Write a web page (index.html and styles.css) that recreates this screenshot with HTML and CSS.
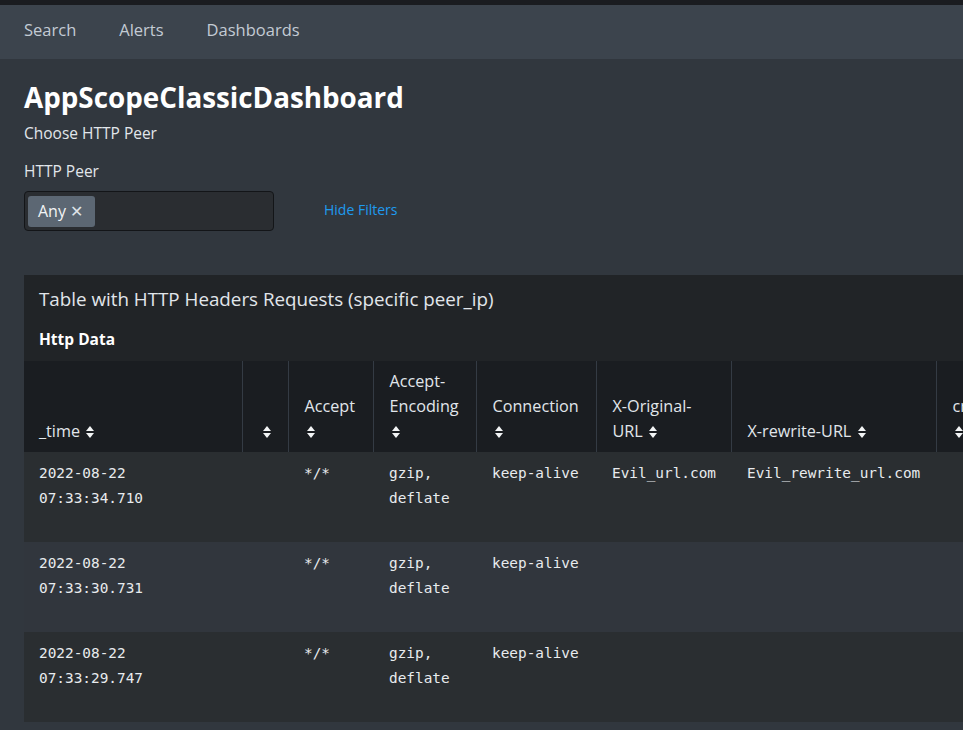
FILE: index.html
```html
<!DOCTYPE html>
<html>
<head>
<meta charset="utf-8">
<link rel="stylesheet" href="styles.css">
</head>
<body>
<nav class="nav">
  <a class="nav-item">Search</a>
  <a class="nav-item">Alerts</a>
  <a class="nav-item">Dashboards</a>
</nav>
<main class="main">
  <h1 class="title">AppScopeClassicDashboard</h1>
  <p class="desc">Choose HTTP Peer</p>
  <div class="filter-label">HTTP Peer</div>
  <div class="filter-row">
    <div class="multiselect">
      <span class="chip">Any <span class="chip-x">✕</span></span>
    </div>
    <a class="hide-filters">Hide Filters</a>
  </div>
  <section class="panel">
    <h2 class="panel-title">Table with HTTP Headers Requests (specific peer_ip)</h2>
    <h3 class="panel-sub">Http Data</h3>
    <table class="tbl">
      <colgroup>
        <col class="c-time"><col class="c-blank"><col class="c-accept"><col class="c-enc"><col class="c-conn"><col class="c-orig"><col class="c-rew"><col class="c-cr">
      </colgroup>
      <thead>
        <tr>
          <th>_time <span class="sort"></span></th>
          <th class="th-blank"><span class="sort"></span></th>
          <th>Accept <span class="sort"></span></th>
          <th>Accept-Encoding <span class="sort"></span></th>
          <th>Connection <span class="sort"></span></th>
          <th>X-Original-URL <span class="sort"></span></th>
          <th>X-rewrite-URL <span class="sort"></span></th>
          <th>credentials <span class="sort"></span></th>
        </tr>
      </thead>
      <tbody>
        <tr>
          <td>2022-08-22 07:33:34.710</td><td></td><td>*/*</td><td>gzip, deflate</td><td>keep-alive</td><td>Evil_url.com</td><td>Evil_rewrite_url.com</td><td></td>
        </tr>
        <tr class="alt">
          <td>2022-08-22 07:33:30.731</td><td></td><td>*/*</td><td>gzip, deflate</td><td>keep-alive</td><td></td><td></td><td></td>
        </tr>
        <tr>
          <td>2022-08-22 07:33:29.747</td><td></td><td>*/*</td><td>gzip, deflate</td><td>keep-alive</td><td></td><td></td><td></td>
        </tr>
      </tbody>
    </table>
  </section>
</main>
</body>
</html>
```

FILE: styles.css
```css
html, body {
  margin: 0;
  padding: 0;
  background: #31373e;
  overflow: hidden;
  width: 963px;
  height: 730px;
}
body {
  font-family: "Open Sans", "Liberation Sans", sans-serif;
  color: #e1e6eb;
}
.nav {
  border-top: 5px solid #1a1c20;
  background: #3c444d;
  height: 54px;
  display: flex;
  align-items: center;
  gap: 43px;
  padding: 0 24px;
}
.nav-item {
  color: #c3cbd4;
  font-size: 16.5px;
  line-height: 22px;
  padding-bottom: 5px;
}
.main {
  padding: 21px 0 0 24px;
}
.title {
  margin: 0;
  font-size: 27.8px;
  line-height: 34px;
  font-weight: 700;
  color: #ffffff;
}
.desc {
  margin: 9px 0 0;
  font-size: 15.5px;
  line-height: 20px;
}
.filter-label {
  margin-top: 18px;
  font-size: 15.5px;
  line-height: 20px;
}
.filter-row {
  margin-top: 10px;
  display: flex;
  align-items: center;
  gap: 50px;
}
.multiselect {
  box-sizing: border-box;
  width: 250px;
  height: 40px;
  background: #2a2d31;
  border: 1px solid #131518;
  border-radius: 4px;
  padding: 3px;
  display: flex;
  align-items: center;
}
.chip {
  box-sizing: border-box;
  height: 31px;
  width: 67px;
  background: #5c6773;
  border-radius: 3px;
  display: flex;
  align-items: center;
  padding-left: 10px;
  gap: 4px;
  font-size: 16px;
  color: #f2f4f5;
}
.chip-x {
  font-size: 16px;
  color: #dfe3e8;
}
.hide-filters {
  color: #1e9bf0;
  font-size: 14px;
  line-height: 18px;
  padding-bottom: 3px;
}
.panel {
  margin-top: 44px;
  width: 1200px;
  background: #212427;
}
.panel-title {
  margin: 0;
  padding: 12px 15px 0;
  font-size: 18.8px;
  line-height: 24px;
  font-weight: 400;
}
.panel-sub {
  margin: 0;
  padding: 16px 15px 0;
  font-size: 15.5px;
  line-height: 24px;
  font-weight: 700;
  color: #ffffff;
  height: 34px;
}
.tbl {
  border-collapse: collapse;
  table-layout: fixed;
  width: 1200px;
}
.c-time { width: 218px; }
.c-blank { width: 46px; }
.c-accept { width: 85px; }
.c-enc { width: 103px; }
.c-conn { width: 120px; }
.c-orig { width: 135px; }
.c-rew { width: 205px; }
.c-cr { width: 288px; }
.tbl th {
  background: #1a1d21;
  height: 90px;
  box-sizing: border-box;
  padding: 8px 12px 8px 16px;
  vertical-align: bottom;
  text-align: left;
  font-weight: 400;
  font-size: 16.2px;
  line-height: 25px;
  border-left: 1px solid #343b44;
  color: #e1e6eb;
}
.tbl th:first-child { border-left: none; padding-left: 15px; }
.tbl th:last-child { padding-right: 230px; }
.tbl th.th-blank { padding-left: 20px; }
.sort {
  display: inline-block;
  position: relative;
  width: 8px;
  height: 12px;
  margin-left: 2px;
  vertical-align: -1px;
}
.th-blank .sort { margin-left: 0; }
.sort::before, .sort::after {
  content: "";
  position: absolute;
  left: 0;
  border-left: 4px solid transparent;
  border-right: 4px solid transparent;
}
.sort::before {
  top: 0;
  border-bottom: 5px solid #f2f4f5;
}
.sort::after {
  bottom: 0;
  border-top: 5px solid #f2f4f5;
}
.tbl td {
  height: 90px;
  box-sizing: border-box;
  padding: 9px 15px 8px 15px;
  vertical-align: top;
  font-family: "DejaVu Sans Mono", "Liberation Mono", monospace;
  font-size: 14.4px;
  line-height: 25px;
  color: #e8ebee;
  background: #2a2e31;
}
.tbl td:nth-child(n+3) { padding-left: 16px; }
.tbl tr.alt td { background: #31363d; }
```
